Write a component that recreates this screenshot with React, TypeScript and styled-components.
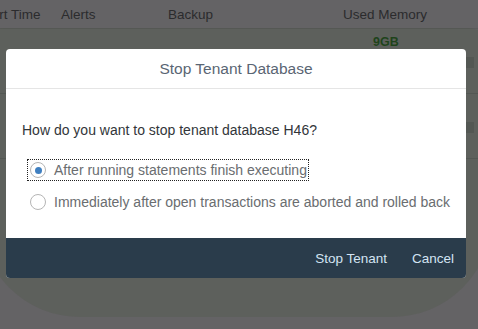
import React, { useState } from "react";
import styled, { createGlobalStyle } from "styled-components";

const Global = createGlobalStyle`
  html, body { margin: 0; padding: 0; background: #646365; }
  body { font-family: "Liberation Sans", Arial, sans-serif; overflow: hidden; }
`;

const Page = styled.div`
  position: relative;
  width: 478px;
  height: 329px;
  overflow: hidden;
  background: #646365;
`;

const Table = styled.div`
  display: flex;
  flex-direction: column;
  margin-left: -21px;
  width: 520px;
`;

const HeaderRow = styled.div`
  display: grid;
  grid-template-columns: 82px 107px 175px 1fr;
  height: 28px;
  align-items: center;
  border-bottom: 1px solid #5b5b5c;
  color: #2b2b2d;
  font-size: 13.5px;
  white-space: nowrap;
`;

const Row = styled.div`
  display: grid;
  grid-template-columns: 82px 107px 175px 1fr;
  height: 64px;
  border-bottom: 1px solid #58595a;
  font-size: 13.5px;
  color: #2b2b2d;
`;

const Cell = styled.div`
  padding-top: 24px;
  white-space: nowrap;
`;

const MemoryCell = styled.div`
  display: flex;
  flex-direction: column;
  padding-top: 6px;
`;

const MemoryValue = styled.span`
  padding-left: 30px;
  height: 22px;
  font-size: 12.5px;
  font-weight: 700;
  color: #1d431b;
`;

const MemoryBar = styled.div`
  width: 131px;
  height: 11px;
  background: #58595b;
`;

const Overlay = styled.div`
  position: absolute;
  inset: 0;
  z-index: 1;
  display: flex;
  align-items: flex-start;
  padding: 49px 0 0 6px;
`;

const Dialog = styled.div`
  position: relative;
  width: 460px;
  display: flex;
  flex-direction: column;
  background: #ffffff;
  border-radius: 4px;

  &::before {
    content: "";
    position: absolute;
    left: -26px;
    right: -26px;
    top: -21px;
    bottom: -39px;
    border-radius: 24px 24px 100px 100px;
    background: rgba(50, 70, 30, 0.12);
    z-index: -1;
  }
`;

const DialogHeader = styled.header`
  height: 39px;
  display: flex;
  align-items: center;
  justify-content: center;
  border-bottom: 1px solid #e5e5e5;
`;

const Title = styled.h1`
  margin: 0;
  font-size: 15.5px;
  font-weight: 400;
  color: #5a6573;
`;

const Content = styled.div`
  height: 149px;
  box-sizing: border-box;
  padding: 33px 16px 0;
  display: flex;
  flex-direction: column;
`;

const Question = styled.p`
  margin: 0 0 21px;
  font-size: 14px;
  line-height: 16px;
  color: #32363a;
`;

const RadioGroup = styled.div`
  display: flex;
  flex-direction: column;
  align-items: flex-start;
  gap: 10px;
`;

const RadioItem = styled.label<{ $focused?: boolean }>`
  display: inline-flex;
  align-items: center;
  gap: 8px;
  height: 22px;
  box-sizing: border-box;
  padding: 0 2px 0 3px;
  margin-left: 5px;
  outline: ${(p) => (p.$focused ? "1px dotted #222" : "none")};
  outline-offset: -1px;
  cursor: pointer;
  font-size: 14px;
  color: #6a6d70;
  white-space: nowrap;
`;

const RadioCircle = styled.span<{ $checked?: boolean }>`
  width: 16px;
  height: 16px;
  box-sizing: border-box;
  border-radius: 50%;
  border: 1.5px solid #b5b5b5;
  display: flex;
  align-items: center;
  justify-content: center;
  flex-shrink: 0;

  &::after {
    content: "";
    width: 7px;
    height: 7px;
    border-radius: 50%;
    background: ${(p) => (p.$checked ? "#3f7fc0" : "transparent")};
  }
`;

const Footer = styled.footer`
  height: 40px;
  display: flex;
  align-items: center;
  justify-content: flex-end;
  gap: 9px;
  padding: 0 4px 0 0;
  background: #2a3c4b;
  border-radius: 0 0 4px 4px;
`;

const FooterButton = styled.button`
  background: none;
  border: none;
  padding: 0 8px;
  height: 32px;
  font-family: "Liberation Sans", Arial, sans-serif;
  font-size: 13.5px;
  color: #d3e4f3;
  cursor: pointer;
`;

const options = [
  "After running statements finish executing",
  "Immediately after open transactions are aborted and rolled back",
];

export default function App() {
  const [selected, setSelected] = useState(0);
  return (
    <Page>
      <Global />
      <Table>
        <HeaderRow>
          <span>Start Time</span>
          <span>Alerts</span>
          <span>Backup</span>
          <span>Used Memory</span>
        </HeaderRow>
        <Row>
          <Cell>11:</Cell>
          <Cell />
          <Cell />
          <MemoryCell>
            <MemoryValue>9GB</MemoryValue>
            <MemoryBar />
          </MemoryCell>
        </Row>
        <Row>
          <Cell>11:</Cell>
          <Cell />
          <Cell />
          <MemoryCell>
            <MemoryValue>7GB</MemoryValue>
            <MemoryBar />
          </MemoryCell>
        </Row>
      </Table>
      <Overlay>
        <Dialog>
          <DialogHeader>
            <Title>Stop Tenant Database</Title>
          </DialogHeader>
          <Content>
            <Question>How do you want to stop tenant database H46?</Question>
            <RadioGroup>
              {options.map((o, i) => (
                <RadioItem key={o} $focused={i === 0} onClick={() => setSelected(i)}>
                  <RadioCircle $checked={selected === i} />
                  {o}
                </RadioItem>
              ))}
            </RadioGroup>
          </Content>
          <Footer>
            <FooterButton>Stop Tenant</FooterButton>
            <FooterButton>Cancel</FooterButton>
          </Footer>
        </Dialog>
      </Overlay>
    </Page>
  );
}
